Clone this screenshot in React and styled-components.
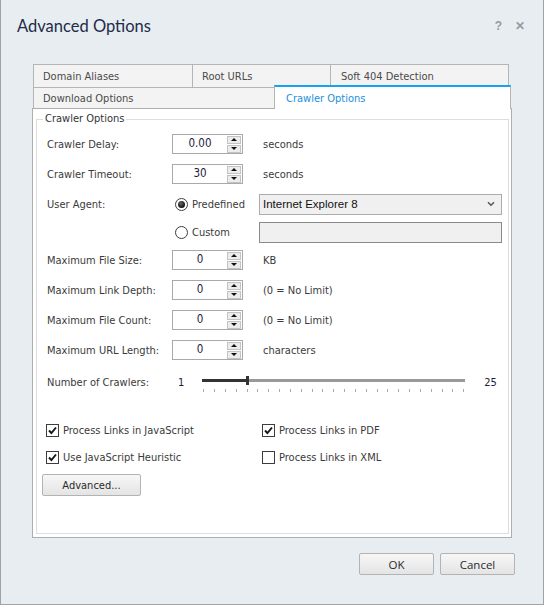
import React from 'react'
import styled, {createGlobalStyle, css} from 'styled-components'

const GlobalStyle = createGlobalStyle`
    html, body {
        margin: 0;
        padding: 0;
        background: #e8edf2;
    }
    * {
        box-sizing: border-box;
    }
`

const UI_FONT = `"DejaVu Sans Condensed", "DejaVu Sans", "Liberation Sans", sans-serif`

const Window = styled.div`
    width: 544px;
    height: 605px;
    background: #e8edf2;
    border: 1px solid #a2a2a2;
    border-top: none;
    display: flex;
    flex-direction: column;
    font-family: ${UI_FONT};
    font-size: 11px;
    color: #3a3a3a;
`

const TitleBar = styled.div`
    height: 64px;
    display: flex;
    align-items: flex-start;
    justify-content: space-between;
    padding: 14px 18px 0 16px;
`

const Title = styled.h1`
    margin: 0;
    font-family: Lato, "Open Sans", sans-serif;
    font-weight: 400;
    font-size: 16.5px;
    line-height: 24px;
    color: #1d2c48;
`

const TitleButtons = styled.div`
    display: flex;
    gap: 13px;
    font-family: "Liberation Sans", sans-serif;
    font-weight: bold;
    font-size: 12px;
    line-height: 24px;
    color: #9a9a9a;
`

const TabStrip = styled.div`
    margin-left: 32px;
    width: 478px;
    display: flex;
    flex-direction: column;
`

const TabRow = styled.div`
    display: flex;
    height: ${p => p.h}px;
`

const Tab = styled.div`
    width: ${p => p.w}px;
    height: 100%;
    margin-right: -1px;
    background: #f3f3f3;
    border: 1px solid #b5b5b5;
    border-bottom: none;
    padding-left: ${p => p.pl || 9}px;
    display: flex;
    align-items: center;
    color: #4a4a4a;
    font-size: 11px;

    ${p => p.active && css`
        position: relative;
        z-index: 1;
        height: 24px;
        margin-top: -2px;
        background: #fff;
        border-top: 2px solid #14a4ef;
        color: #1b8fdc;
    `}
`

const Panel = styled.div`
    margin-left: 31px;
    width: 480px;
    height: 430px;
    background: #fff;
    border: 1px solid #aeaeae;
    padding: 3px 2px 3px 3px;
    display: flex;
`

const Group = styled.fieldset`
    flex: 1;
    margin: 0;
    padding: 0;
    min-width: 0;
    border: 1px solid #dddddd;
`

const Legend = styled.legend`
    margin-left: 6px;
    padding: 0 2px;
    line-height: 14px;
    color: #333;
`

const Form = styled.div`
    padding: 3px 0 0 10px;
    display: flex;
    flex-direction: column;
`

const Row = styled.div`
    height: ${p => p.h || 30}px;
    display: grid;
    grid-template-columns: ${p => p.cols || '125px 71px auto'};
    align-items: center;
`

const Unit = styled.span`
    padding-left: 20px;
    color: #3a3a3a;
`

const SpinBox = styled.div`
    width: 71px;
    height: 20px;
    border: 1px solid #a9a9a9;
    background: #fff;
    display: flex;
    align-items: center;
`

const SpinValue = styled.div`
    flex: 1;
    text-align: center;
    color: #1c1c3c;
    font-size: 11.5px;
    padding-bottom: 2px;
`

const SpinButtons = styled.div`
    width: 14px;
    margin-right: 1px;
    display: flex;
    flex-direction: column;
    gap: 1px;
`

const SpinButton = styled.div`
    height: 8px;
    background: #ececec;
    border: 1px solid #c3c3c3;
    display: flex;
    align-items: center;
    justify-content: center;

    &::after {
        content: '';
        border-left: 3px solid transparent;
        border-right: 3px solid transparent;
        ${p => p.down
            ? css`border-top: 3px solid #111;`
            : css`border-bottom: 3px solid #111;`}
    }
`

const Spin = ({value}) => (
    <SpinBox>
        <SpinValue>{value}</SpinValue>
        <SpinButtons>
            <SpinButton />
            <SpinButton down />
        </SpinButtons>
    </SpinBox>
)

const RadioLabel = styled.label`
    display: flex;
    align-items: center;
    gap: 4px;
    padding-left: 3px;
    font-size: 11px;
    color: #3a3a3a;
`

const RadioCircle = styled.span`
    width: 13px;
    height: 13px;
    border-radius: 50%;
    border: 1px solid #3d3d3d;
    background: #fff;
    display: flex;
    align-items: center;
    justify-content: center;

    ${p => p.checked && css`
        &::after {
            content: '';
            width: 7px;
            height: 7px;
            border-radius: 50%;
            background: radial-gradient(circle at 40% 35%, #666, #111 70%);
        }
    `}
`

const Select = styled.div`
    width: 243px;
    height: 21px;
    border: 1px solid #acacac;
    background: #f0f0f0;
    display: flex;
    align-items: center;
    justify-content: space-between;
    padding: 0 6px 0 3px;
    font-family: "Liberation Sans", sans-serif;
    font-size: 11.5px;
    color: #111;
`

const TextBox = styled.div`
    width: 243px;
    height: 21px;
    border: 1px solid #8a8a8a;
    background: #f0f0f0;
`

const SliderWrap = styled.div`
    display: flex;
    align-items: center;
    height: 100%;
`

const SliderEnd = styled.span`
    color: #1c1c3c;
    margin-left: ${p => p.ml}px;
`

const Slider = styled.div`
    width: 263px;
    margin-left: ${p => p.ml}px;
    margin-top: 4px;
    display: flex;
    flex-direction: column;
    gap: 4px;
`

const Track = styled.div`
    display: flex;
    align-items: center;
    height: 9px;
`

const TrackFill = styled.div`
    height: 3px;
    background: ${p => p.dark ? '#333' : '#999'};
    flex: ${p => p.dark ? 'none' : 1};
`

const Thumb = styled.div`
    width: 3px;
    height: 9px;
    background: #333;
`

const Ticks = styled.div`
    display: flex;
    justify-content: space-between;
    padding: 0 1px;
`

const Tick = styled.span`
    width: 1px;
    height: 3px;
    background: #aaa;
`

const CheckGrid = styled.div`
    margin-top: 21px;
    padding-left: 9px;
    display: grid;
    grid-template-columns: 216px auto;
    row-gap: 7px;
`

const CheckLabel = styled.label`
    height: 20px;
    display: flex;
    align-items: center;
    gap: 4px;
    color: #3a3a3a;
`

const CheckBox = styled.span`
    width: 13px;
    height: 13px;
    border: 1px solid #3d3d3d;
    background: #fff;
    display: flex;
    align-items: center;
    justify-content: center;
`

const Button = styled.button`
    width: ${p => p.w}px;
    height: 22px;
    padding: 0;
    border: 1px solid #b3b3b3;
    border-radius: 2px;
    background: linear-gradient(#f7f7f7, #e4e4e4);
    font-family: ${p => p.segoe ? `"Open Sans", sans-serif` : UI_FONT};
    font-size: ${p => p.segoe ? 11.5 : 11}px;
    color: #2a2a2a;
`

const AdvancedButton = styled(Button)`
    margin: 7px 0 0 5px;
    align-self: flex-start;
`

const Footer = styled.div`
    display: flex;
    justify-content: flex-end;
    gap: 6px;
    margin-top: 15px;
    padding-right: 28px;
`

const Check = ({checked, children}) => (
    <CheckLabel>
        <CheckBox>
            {checked && (
                <svg width="9" height="9" viewBox="0 0 9 9">
                    <path d="M1 4.5 L3.4 7 L8 1.5" fill="none" stroke="#151515" strokeWidth="1.9" />
                </svg>
            )}
        </CheckBox>
        {children}
    </CheckLabel>
)

const Chevron = () => (
    <svg width="8" height="6" viewBox="0 0 8 6">
        <path d="M1 1.2 L4 4.2 L7 1.2" fill="none" stroke="#555" strokeWidth="1.5" />
    </svg>
)

const spinRows = [
    {label: 'Maximum File Size:', unit: 'KB'},
    {label: 'Maximum Link Depth:', unit: '(0 = No Limit)'},
    {label: 'Maximum File Count:', unit: '(0 = No Limit)'},
    {label: 'Maximum URL Length:', unit: 'characters'},
]

const crawlers = {min: 1, max: 25, value: 5}

const App = () => {
    const fill = (crawlers.value - crawlers.min) / (crawlers.max - crawlers.min) * 260
    return (
        <Window>
            <GlobalStyle />
            <TitleBar>
                <Title>Advanced Options</Title>
                <TitleButtons>
                    <span>?</span>
                    <span>✕</span>
                </TitleButtons>
            </TitleBar>
            <TabStrip>
                <TabRow h={23}>
                    <Tab w={160}>Domain Aliases</Tab>
                    <Tab w={139}>Root URLs</Tab>
                    <Tab w={179} pl={10}>Soft 404 Detection</Tab>
                </TabRow>
                <TabRow h={21}>
                    <Tab w={242}>Download Options</Tab>
                    <Tab w={237} pl={11} active>Crawler Options</Tab>
                </TabRow>
            </TabStrip>
            <Panel>
                <Group>
                    <Legend>Crawler Options</Legend>
                    <Form>
                        <Row>
                            <span>Crawler Delay:</span>
                            <Spin value="0.00" />
                            <Unit>seconds</Unit>
                        </Row>
                        <Row>
                            <span>Crawler Timeout:</span>
                            <Spin value="30" />
                            <Unit>seconds</Unit>
                        </Row>
                        <Row cols="125px 87px 243px">
                            <span>User Agent:</span>
                            <RadioLabel><RadioCircle checked />Predefined</RadioLabel>
                            <Select>Internet Explorer 8<Chevron /></Select>
                        </Row>
                        <Row h={26} cols="125px 87px 243px">
                            <span />
                            <RadioLabel><RadioCircle />Custom</RadioLabel>
                            <TextBox />
                        </Row>
                        {spinRows.map(r => (
                            <Row key={r.label}>
                                <span>{r.label}</span>
                                <Spin value="0" />
                                <Unit>{r.unit}</Unit>
                            </Row>
                        ))}
                        <Row h={34} cols="125px auto">
                            <span>Number of Crawlers:</span>
                            <SliderWrap>
                                <SliderEnd ml={6}>{crawlers.min}</SliderEnd>
                                <Slider ml={18}>
                                    <Track>
                                        <TrackFill dark style={{width: fill}} />
                                        <Thumb />
                                        <TrackFill />
                                    </Track>
                                    <Ticks>
                                        {Array.from({length: 25}, (_, i) => <Tick key={i} />)}
                                    </Ticks>
                                </Slider>
                                <SliderEnd ml={19}>{crawlers.max}</SliderEnd>
                            </SliderWrap>
                        </Row>
                    </Form>
                    <CheckGrid>
                        <Check checked>Process Links in JavaScript</Check>
                        <Check checked>Process Links in PDF</Check>
                        <Check checked>Use JavaScript Heuristic</Check>
                        <Check>Process Links in XML</Check>
                    </CheckGrid>
                    <AdvancedButton w={99}>Advanced...</AdvancedButton>
                </Group>
            </Panel>
            <Footer>
                <Button w={75} segoe>OK</Button>
                <Button w={75} segoe>Cancel</Button>
            </Footer>
        </Window>
    )
}

export default App
